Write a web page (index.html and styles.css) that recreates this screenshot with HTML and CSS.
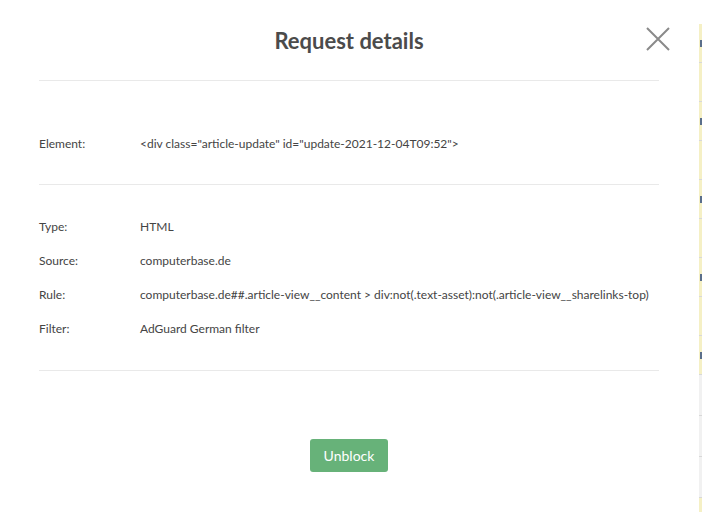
FILE: index.html
```html
<!DOCTYPE html>
<html>
<head>
<meta charset="utf-8">
<link rel="stylesheet" href="styles.css">
</head>
<body>
<div class="page">
  <div class="modal">
    <div class="header">
      <h1 class="title">Request details</h1>
      <button class="close" aria-label="Close">
        <svg width="24" height="24" viewBox="0 0 24 24"><path d="M1 1 L23 23 M23 1 L1 23" stroke="#8a8a8a" stroke-width="2" fill="none"/></svg>
      </button>
    </div>
    <div class="section first">
      <div class="row"><span class="label">Element:</span><span class="value">&lt;div class="article-update" id="update-2021-12-04T09:52"&gt;</span></div>
    </div>
    <div class="section second">
      <div class="row"><span class="label">Type:</span><span class="value">HTML</span></div>
      <div class="row"><span class="label">Source:</span><span class="value">computerbase.de</span></div>
      <div class="row"><span class="label">Rule:</span><span class="value">computerbase.de##.article-view__content &gt; div:not(.text-asset):not(.article-view__sharelinks-top)</span></div>
      <div class="row"><span class="label">Filter:</span><span class="value">AdGuard German filter</span></div>
    </div>
    <div class="footer">
      <button class="unblock">Unblock</button>
    </div>
  </div>
  <div class="backdrop">
    <div class="strip-top"></div>
    <div class="strip-row y"><i class="mark"></i></div>
    <div class="strip-row y"></div>
    <div class="strip-row y"><i class="mark"></i></div>
    <div class="strip-row y"></div>
    <div class="strip-row y"><i class="mark"></i></div>
    <div class="strip-row y"></div>
    <div class="strip-row y"><i class="mark"></i></div>
    <div class="strip-row y"></div>
    <div class="strip-row y"><i class="mark"></i></div>
    <div class="strip-row g"></div>
    <div class="strip-row g"></div>
    <div class="strip-row g"></div>
    <div class="strip-row y"></div>
  </div>
</div>
</body>
</html>
```
FILE: styles.css
```css
html, body {
  margin: 0;
  padding: 0;
  background: #ffffff;
}
.page {
  display: flex;
  width: 702px;
  height: 512px;
  overflow: hidden;
}
.modal {
  width: 620px;
  flex: none;
  padding: 0 40px 0 39px;
  background: #ffffff;
  font-family: "Lato", "Open Sans", sans-serif;
  color: #444444;
}
.header {
  position: relative;
  height: 80px;
  border-bottom: 1px solid #e9e9e9;
  display: flex;
  justify-content: center;
}
.title {
  margin: 27px 0 0 0;
  font-size: 22px;
  font-weight: 700;
  line-height: 28px;
  color: #4b4b4b;
}
.close {
  position: absolute;
  right: -11px;
  top: 27px;
  padding: 0;
  border: 0;
  background: none;
  width: 24px;
  height: 24px;
}
.close svg { display: block; }
.section {
  border-bottom: 1px solid #e9e9e9;
}
.section.first {
  padding: 45px 0 24px;
}
.section.second {
  padding: 24px 0 25px;
}
.row {
  display: flex;
  height: 34px;
  align-items: center;
  font-size: 12px;
}
.label {
  width: 101px;
  flex: none;
}
.value {
  white-space: nowrap;
}
.footer {
  display: flex;
  justify-content: center;
  padding-top: 68px;
}
.unblock {
  width: 78px;
  height: 33px;
  border: 0;
  border-radius: 3px;
  background: #67b279;
  color: #ffffff;
  font-family: "Lato", "Open Sans", sans-serif;
  font-size: 14px;
  padding: 0;
}
.backdrop {
  flex: 1;
  display: flex;
  flex-direction: column;
  background: #f3f3f3;
}
.strip-top {
  height: 24px;
  flex: none;
  background: #ffffff;
}
.strip-row {
  flex: none;
  height: 38px;
  border-bottom: 1px solid #d8d8d8;
  position: relative;
}
.strip-row.y { background: #f5f0c5; }
.strip-row.g { background: #f1f1f1; height: 40px; }
.mark {
  position: absolute;
  left: 1px;
  top: 16px;
  width: 2px;
  height: 7px;
  background: #5a6e8a;
}
```
